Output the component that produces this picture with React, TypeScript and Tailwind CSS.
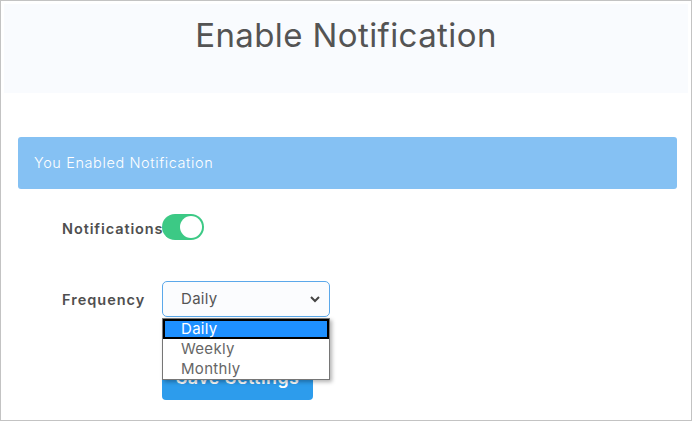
import { useState } from "react";

const App = () => {
  // toggle + frequency state
  const [enabled, setEnabled] = useState(true);
  const [frequency, setFrequency] = useState("Daily");
  const options = ["Daily", "Weekly", "Monthly"];

  return (
    <div
      className="w-[692px] h-[421px] border border-[#c3c3c3] bg-white overflow-hidden text-[#555]"
      style={{ fontFamily: "Inter, 'Open Sans', sans-serif" }}
    >
      <div className="mx-[3px] mt-[3px] h-[89px] bg-[#f9fbfe] flex justify-center pt-[9px]">
        <h1 className="text-[33px] font-normal tracking-[0.4px] text-[#545454] leading-[44px]">
          Enable Notification
        </h1>
      </div>

      <div className="ml-[17px] mr-[14px] mt-[44px]">
        <div className="h-[52px] bg-[#85c1f3] rounded-[3px] flex items-center pl-[16px] text-white text-[14.5px] font-light tracking-[0.6px]">
          You Enabled Notification
        </div>

        <div className="pl-[44px]">
          <div className="flex items-center mt-[25px] h-[26px]">
            <span className="w-[100px] text-[14.5px] font-semibold text-[#4f4f4f] tracking-[0.9px] pt-[4px] whitespace-nowrap">
              Notifications
            </span>
            <button
              type="button"
              onClick={() => setEnabled(!enabled)}
              className="w-[42px] h-[26px] rounded-full bg-[#3cc985] flex items-center px-[2px] justify-end"
            >
              <span className="w-[22px] h-[22px] rounded-full bg-white" />
            </button>
          </div>

          <div className="flex items-center mt-[41px] h-[36px]">
            <span className="w-[100px] text-[14.5px] font-semibold text-[#4f4f4f] tracking-[1px] pt-[2px]">
              Frequency
            </span>
            <div className="relative">
              <div className="w-[168px] h-[36px] border border-[#5ba8ea] rounded-[5px] bg-[#fbfcfe] flex items-center justify-between pl-[18px] pr-[8px] text-[15px] text-[#555] tracking-[0.3px]">
                <span>{frequency}</span>
                <svg width="12" height="12" viewBox="0 0 12 12">
                  <path d="M2 4 L6 8 L10 4" fill="none" stroke="#444" strokeWidth="2" />
                </svg>
              </div>

              {/* open option list */}
              <div className="absolute left-0 top-[37px] w-[168px] border border-[#767676] bg-white shadow-[2px_2px_4px_rgba(0,0,0,0.3)] z-10">
                {options.map((o) => (
                  <div
                    key={o}
                    onClick={() => setFrequency(o)}
                    className={
                      o === frequency
                        ? "h-[20px] bg-[#1e90ff] border-2 border-black text-white text-[15px] leading-[16px] pl-[16px] tracking-[0.3px]"
                        : "h-[20px] text-[#666] text-[15px] leading-[20px] pl-[18px] tracking-[0.3px]"
                    }
                  >
                    {o}
                  </div>
                ))}
              </div>
            </div>
          </div>

          <button
            type="button"
            className="ml-[100px] mt-[38px] w-[151px] h-[45px] bg-[#2d9cec] rounded-[4px] text-white text-[18px] font-semibold tracking-[0.4px]"
          >
            Save Settings
          </button>
        </div>
      </div>
    </div>
  );
};

export default App;
